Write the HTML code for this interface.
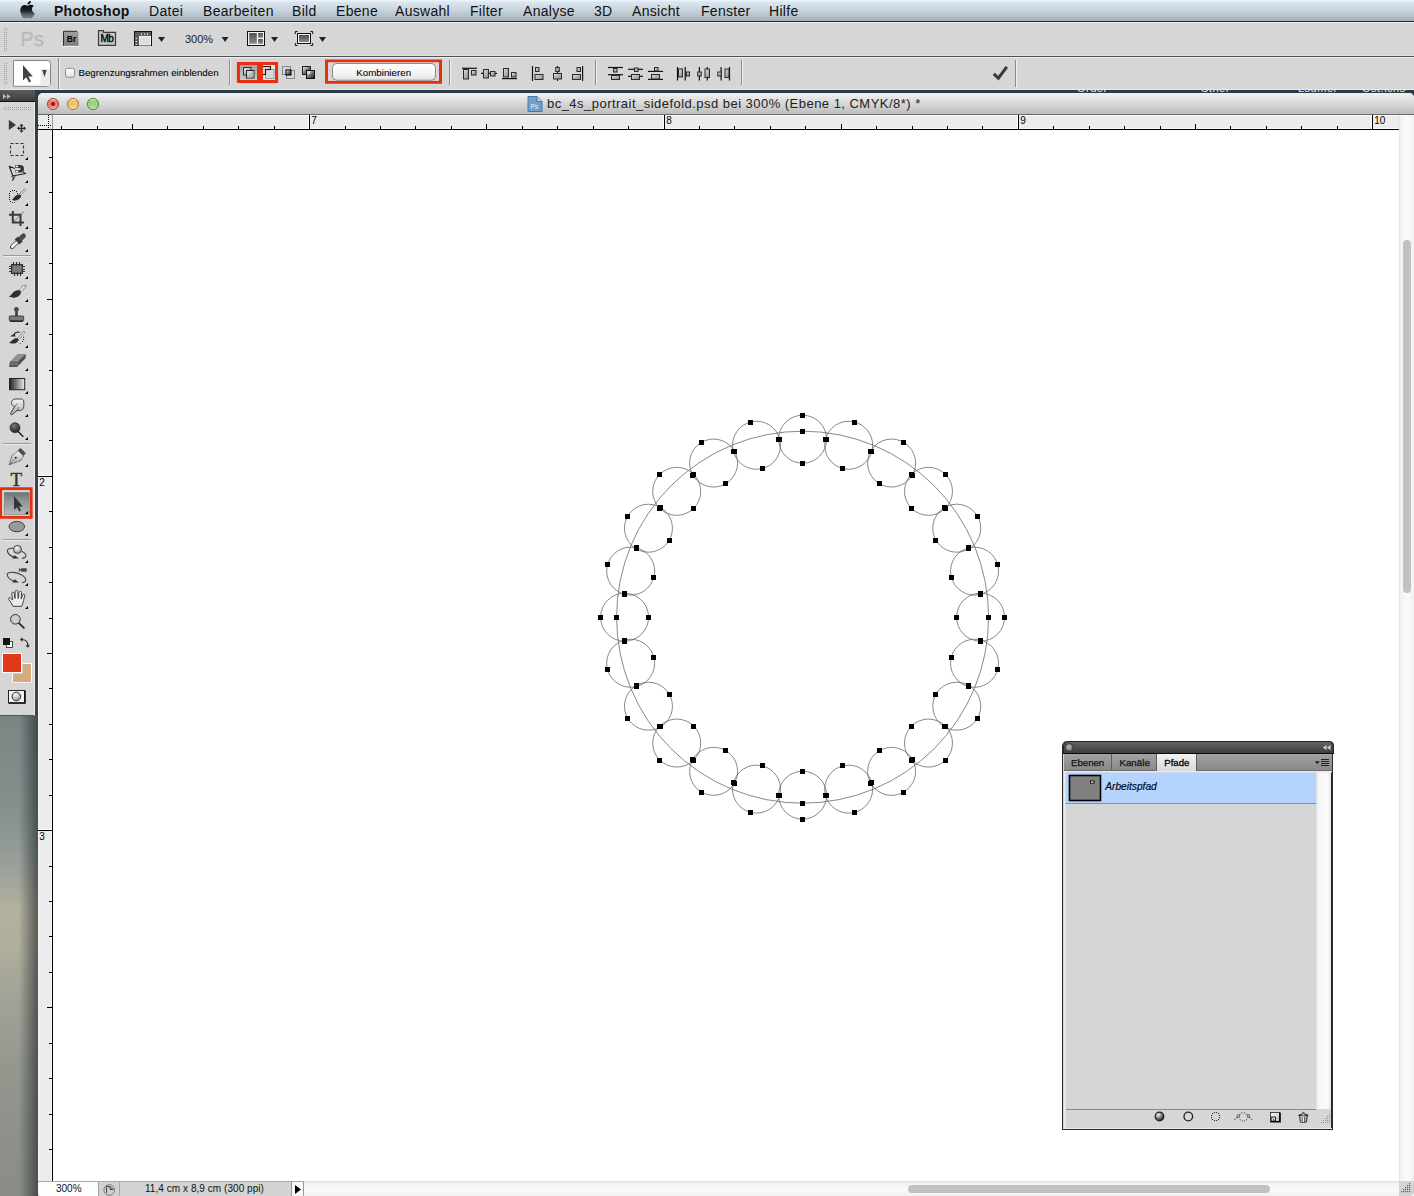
<!DOCTYPE html>
<html><head><meta charset="utf-8">
<style>
*{margin:0;padding:0;box-sizing:border-box}
html,body{width:1414px;height:1196px;overflow:hidden;background:#2a3c4a;font-family:"Liberation Sans",sans-serif}
.a{position:absolute}
svg{overflow:visible}
#menubar{left:0;top:0;width:1414px;height:22px;background:linear-gradient(#f0f7fc 0px,#dbe7f0 2px,#c9d5de 10px,#a9b5bd 20px);border-bottom:1px solid #1e2a34}
#menubar span{position:absolute;top:3px;font-size:14px;color:#111;letter-spacing:0.3px}
#appbar{left:0;top:22px;width:1414px;height:36px;background:#d6d6d6;border-top:1px solid #f0f0f0}
#appbar .l1{left:0;top:32px;width:1414px;height:1px;background:#e4e4e4}
#appbar .l2{left:0;top:33px;width:1414px;height:1px;background:#4e5256}
#appbar .l3{left:0;top:34px;width:1414px;height:1px;background:#ececec}
#optbar{left:0;top:58px;width:1414px;height:32px;background:#d6d6d6;border-bottom:1px solid #ececec}
#tools{left:0;top:102px;width:35px;height:614px;background:#d6d6d6;border-right:1px solid #ececec;border-bottom:1px solid #555}
#toolhdr{left:0;top:90px;width:35px;height:12px;background:linear-gradient(#5c5c5c,#3e3e3e);border-bottom:1px solid #111}
#desk{left:0;top:716px;width:38px;height:480px;background:linear-gradient(90deg,rgba(0,0,0,0) 0%,rgba(0,0,0,0) 50%,rgba(30,38,40,0.3) 75%,rgba(30,38,40,0.62) 100%),linear-gradient(#7a8584 0%,#86908e 20%,#9ca19a 32%,#b2b09e 40%,#b0ae9c 48%,#a2a398 58%,#95988f 72%,#8e9189 86%,#8a8d86 100%)}
#docwin{left:38px;top:93px;width:1376px;height:1103px;background:#fff;border-radius:5px 5px 0 5px;overflow:hidden}
#title{left:0;top:0;width:1376px;height:22px;background:linear-gradient(#f2f2f2,#dcdcdc 40%,#bdbdbd);border-bottom:1px solid #6a6a6a}
#title .t{position:absolute;left:509px;top:3px;font-size:13px;color:#222;letter-spacing:0.47px;white-space:nowrap}
#hruler{left:38px;top:115px;width:1361px;height:15px;background:#ececec;border-top:1px solid #fafafa;border-bottom:1px solid #000;box-shadow:inset 0 -1px 0 #fafafa}
#vruler{left:38px;top:130px;width:15px;height:1051px;background:#ececec;border-right:1px solid #000;box-shadow:inset -1px 0 0 #fafafa,inset 1px 0 0 #f6f6f6}
#corner{left:38px;top:115px;width:15px;height:15px;background:#ececec;border-right:1px solid #999;border-bottom:1px solid #000}
#vscroll{left:1399px;top:115px;width:15px;height:1066px;background:linear-gradient(90deg,#e2e2e2,#f4f4f4 2px,#fafafa 60%,#f0f0f0)}
#vthumb{left:1403px;top:240px;width:8px;height:353px;background:#c1c1c1;border-radius:4px}
#hscroll{left:304px;top:1181px;width:1095px;height:15px;background:linear-gradient(#e0e0e0,#f2f2f2 2px,#fafafa 60%,#f0f0f0)}
#hthumb{left:908px;top:1185px;width:362px;height:8px;background:#c1c1c1;border-radius:4px}
#status{left:38px;top:1181px;width:266px;height:15px;background:#d4d4d4;border-top:1px solid #a8a8a8;font-size:10px;color:#111}
#panel{left:1062px;top:741px;width:271px;height:389px;background:#d6d6d6;border-style:solid;border-color:#2a2a2a;border-width:0 2px 1px 1px;border-radius:5px 5px 0 0}
</style></head><body>
<div id="menubar" class="a">
<svg class="a" style="left:20px;top:0px" width="16" height="20">
<defs><linearGradient id="ap" x1="0" y1="0" x2="0" y2="1"><stop offset="0" stop-color="#0a0a0a"/><stop offset="0.45" stop-color="#1a2630"/><stop offset="0.7" stop-color="#58626a"/><stop offset="1" stop-color="#7c8488"/></linearGradient></defs>
<path d="M7.4 4.5 C7.3 2.8 8.8 1.0 11.0 0.9 C11.1 2.8 9.4 4.4 7.4 4.5 Z" fill="#0a0a0a"/>
<path d="M7.5 5.8 C6.5 5.0 5.2 4.8 4.2 4.9 C1.8 5.2 0.3 7.5 0.3 10.2 C0.3 13.8 2.5 18.6 4.6 18.6 C5.6 18.6 6.2 18.0 7.5 18.0 C8.8 18.0 9.3 18.6 10.4 18.6 C12.2 18.6 14.0 15.6 14.9 13.5 C13.0 12.6 12.0 11.0 12.0 9.2 C12.0 7.6 12.9 6.4 14.0 5.8 C13.0 5.1 11.8 4.8 10.8 4.8 C9.4 4.8 8.5 5.5 7.5 5.8 Z" fill="url(#ap)"/>
</svg>

<span style="left:54px;font-weight:bold;letter-spacing:0.28px">Photoshop</span>
<span style="left:149px">Datei</span>
<span style="left:203px">Bearbeiten</span>
<span style="left:292px">Bild</span>
<span style="left:336px">Ebene</span>
<span style="left:395px">Auswahl</span>
<span style="left:470px">Filter</span>
<span style="left:523px">Analyse</span>
<span style="left:594px">3D</span>
<span style="left:632px">Ansicht</span>
<span style="left:701px">Fenster</span>
<span style="left:769px">Hilfe</span>
</div>
<div id="appbar" class="a"><div class="a l1"></div><div class="a l2"></div><div class="a l3"></div></div>
<svg class="a" style="left:0;top:22px" width="340" height="36" font-family="Liberation Sans">
<defs>
<linearGradient id="brg" x1="0" y1="0" x2="0" y2="1"><stop offset="0" stop-color="#a0a0a0"/><stop offset="1" stop-color="#7e7e7e"/></linearGradient>
<linearGradient id="pane" x1="0" y1="0" x2="0" y2="1"><stop offset="0" stop-color="#505050"/><stop offset="1" stop-color="#8a8a8a"/></linearGradient>
</defs>
<g fill="#a0a0a0">
<rect x="4" y="6" width="1" height="1"/><rect x="6" y="6" width="1" height="1"/><rect x="4" y="8" width="1" height="1"/><rect x="6" y="8" width="1" height="1"/><rect x="4" y="10" width="1" height="1"/><rect x="6" y="10" width="1" height="1"/><rect x="4" y="12" width="1" height="1"/><rect x="6" y="12" width="1" height="1"/><rect x="4" y="14" width="1" height="1"/><rect x="6" y="14" width="1" height="1"/><rect x="4" y="16" width="1" height="1"/><rect x="6" y="16" width="1" height="1"/><rect x="4" y="18" width="1" height="1"/><rect x="6" y="18" width="1" height="1"/><rect x="4" y="20" width="1" height="1"/><rect x="6" y="20" width="1" height="1"/><rect x="4" y="22" width="1" height="1"/><rect x="6" y="22" width="1" height="1"/><rect x="4" y="24" width="1" height="1"/><rect x="6" y="24" width="1" height="1"/><rect x="4" y="26" width="1" height="1"/><rect x="6" y="26" width="1" height="1"/><rect x="4" y="28" width="1" height="1"/><rect x="6" y="28" width="1" height="1"/>
</g>
<text x="20.2" y="24.4" font-size="20.5" fill="#f4f4f4" stroke="#f4f4f4" stroke-width="0.8">Ps</text>
<text x="20.2" y="23.6" font-size="20.5" fill="#bababa" stroke="#bababa" stroke-width="0.8">Ps</text>
<!-- Br -->
<rect x="63.5" y="9.3" width="15" height="14.5" fill="url(#brg)"/>
<path d="M63.5 23.8 V9.3 H77" fill="none" stroke="#2a2a2a" stroke-width="1"/>
<rect x="63" y="24" width="16" height="1" fill="#f2f2f2"/>
<text x="66.8" y="20.2" font-size="8.6" font-weight="bold" fill="#000">Br</text>
<!-- Mb -->
<path d="M98.5 23.3 V8.6 H103.5 V10.4 H115.5 V23.3 Z" fill="#c6c6c6" stroke="#3a3a3a" stroke-width="1.2"/>
<text x="100.4" y="20.3" font-size="10" fill="#000" stroke="#000" stroke-width="0.35" letter-spacing="-0.4">Mb</text>
<!-- frame icon -->
<rect x="134.5" y="9.5" width="17" height="14" fill="#dedede" stroke="#111" stroke-width="1"/>
<rect x="135" y="10" width="16" height="4" fill="#5e5e5e"/>
<rect x="135" y="10" width="4" height="13.5" fill="#5e5e5e"/>
<rect x="139.5" y="14.5" width="11" height="8.5" fill="none" stroke="#f4f4f4" stroke-width="1"/>
<g fill="#e8e8e8"><rect x="141" y="11.5" width="1" height="1.5"/><rect x="144" y="11.5" width="1" height="1.5"/><rect x="147" y="11.5" width="1" height="1.5"/><rect x="135.5" y="16" width="1.5" height="1"/><rect x="135.5" y="19" width="1.5" height="1"/><rect x="135.5" y="22" width="1.5" height="1"/></g>
<path d="M158 14.9 H165 L161.5 20 Z" fill="#222"/>
<text x="185" y="21" font-size="11" fill="#222">300%</text>
<path d="M221.7 14.9 H228.5 L225.1 20 Z" fill="#222"/>
<!-- arrange -->
<rect x="247.5" y="9.5" width="17" height="14" fill="#f4f4f4" stroke="#111" stroke-width="1"/>
<rect x="249.2" y="11" width="7.6" height="10.8" fill="url(#pane)"/>
<rect x="258.1" y="11" width="4.8" height="4.8" fill="url(#pane)"/>
<rect x="258.1" y="17" width="4.8" height="4.8" fill="url(#pane)"/>
<path d="M271 14.9 H278 L274.5 20 Z" fill="#222"/>
<!-- screen mode -->
<path d="M295.3 12 V9.5 H297.5 M310.5 9.5 H312.7 V12 M312.7 21 V23.5 H310.5 M297.5 23.5 H295.3 V21" fill="none" stroke="#111" stroke-width="1"/>
<rect x="297.5" y="11.5" width="13" height="10" fill="#f4f4f4" stroke="#111" stroke-width="1"/>
<rect x="299" y="13" width="10" height="7" fill="url(#pane)"/>
<path d="M319 14.9 H326 L322.5 20 Z" fill="#222"/>
</svg>

<div id="optbar" class="a"></div>
<svg class="a" style="left:0;top:56px" width="1414" height="36" font-family="Liberation Sans">
<defs>
<linearGradient id="cbx" x1="0" y1="0" x2="0" y2="1"><stop offset="0" stop-color="#ffffff"/><stop offset="1" stop-color="#e2e2e2"/></linearGradient>
<linearGradient id="btn" x1="0" y1="0" x2="0" y2="1"><stop offset="0" stop-color="#ffffff"/><stop offset="0.5" stop-color="#f6f6f6"/><stop offset="1" stop-color="#e4e4e4"/></linearGradient>
<linearGradient id="sel" x1="0" y1="0" x2="0" y2="1"><stop offset="0" stop-color="#9ea4a6"/><stop offset="1" stop-color="#c8cacb"/></linearGradient>
<linearGradient id="blk" x1="0" y1="0" x2="1" y2="1"><stop offset="0" stop-color="#e8e8e8"/><stop offset="1" stop-color="#9a9a9a"/></linearGradient>
<linearGradient id="dk" x1="0" y1="0" x2="1" y2="1"><stop offset="0" stop-color="#ffffff"/><stop offset="0.5" stop-color="#777"/><stop offset="1" stop-color="#111"/></linearGradient>
</defs>
<!-- grip -->
<g fill="#a0a0a0">
<rect x="4" y="7" width="1" height="1"/><rect x="6" y="7" width="1" height="1"/><rect x="4" y="9" width="1" height="1"/><rect x="6" y="9" width="1" height="1"/><rect x="4" y="11" width="1" height="1"/><rect x="6" y="11" width="1" height="1"/><rect x="4" y="13" width="1" height="1"/><rect x="6" y="13" width="1" height="1"/><rect x="4" y="15" width="1" height="1"/><rect x="6" y="15" width="1" height="1"/><rect x="4" y="17" width="1" height="1"/><rect x="6" y="17" width="1" height="1"/><rect x="4" y="19" width="1" height="1"/><rect x="6" y="19" width="1" height="1"/><rect x="4" y="21" width="1" height="1"/><rect x="6" y="21" width="1" height="1"/><rect x="4" y="23" width="1" height="1"/><rect x="6" y="23" width="1" height="1"/><rect x="4" y="25" width="1" height="1"/><rect x="6" y="25" width="1" height="1"/><rect x="4" y="27" width="1" height="1"/><rect x="6" y="27" width="1" height="1"/>
</g>
<!-- preset box -->
<path d="M13.5 4.5 H47.5 Q50.5 4.5 50.5 7.5 V27.3 Q50.5 30.3 47.5 30.3 H13.5 Z" fill="#fff" stroke="#858585" stroke-width="1"/>
<rect x="40.5" y="13" width="9.5" height="16.8" fill="#ececec"/>
<path d="M23 9 V24.5 L26.3 21.3 L29 26.5 L31 25.5 L28.4 20.4 H32.8 Z" fill="#444"/>
<path d="M42.2 14 H46.7 L44.5 21 Z" fill="#444"/>
<rect x="58" y="2" width="1" height="31" fill="#8a8a8a"/><rect x="59" y="2" width="1" height="31" fill="#f0f0f0"/>
<!-- checkbox -->
<rect x="65.5" y="12.3" width="9" height="9" rx="2" fill="url(#cbx)" stroke="#8e8e8e" stroke-width="1"/>
<text x="78.5" y="20.3" font-size="9.7" fill="#000010" stroke="#000010" stroke-width="0.08">Begrenzungsrahmen einblenden</text>
<rect x="229" y="4" width="1" height="25" fill="#8a8a8a"/><rect x="230" y="4" width="1" height="25" fill="#f0f0f0"/>
<!-- red box 1 -->
<path d="M236.9 5.9 H278.1 V27 H236.9 Z M240 9 V24 H257 V9 Z M263 9 V24 H275 V9 Z" fill="#e8300e" fill-rule="evenodd"/>
<rect x="240" y="9" width="17" height="15" fill="url(#sel)"/>
<rect x="243.5" y="11.5" width="7.5" height="7.5" fill="url(#blk)" stroke="#333" stroke-width="1"/>
<rect x="246.5" y="14.5" width="7.5" height="7.5" fill="#c8c8c8" stroke="#222" stroke-width="1"/>
<rect x="247" y="15" width="6.5" height="6.5" fill="url(#blk)"/>
<rect x="263" y="9" width="11.8" height="14.8" fill="#dde6e8"/>
<rect x="265.5" y="13.5" width="8.5" height="9" fill="#d8d8d8" stroke="#9aa4a4" stroke-width="1"/>
<path d="M263 18.5 H265.5 V13.5 H270.5 V10.5 H263 Z" fill="#d0d4d4"/>
<path d="M263 18.5 H265.5 V13.5 H270.5 V10.5 H263" fill="none" stroke="#1a1a1a" stroke-width="1.1"/>
<!-- intersect -->
<rect x="282.5" y="10.5" width="8" height="8" fill="none" stroke="#888" stroke-width="1"/>
<rect x="286.5" y="14.5" width="8" height="8" fill="none" stroke="#888" stroke-width="1"/>
<rect x="286" y="14" width="5" height="5" fill="url(#dk)" stroke="#000" stroke-width="1"/>
<!-- exclude -->
<rect x="302.5" y="10.5" width="8" height="8" fill="url(#dk)" stroke="#222" stroke-width="1"/>
<rect x="306.5" y="14.5" width="8" height="8" fill="url(#dk)" stroke="#111" stroke-width="1"/>
<rect x="307" y="15" width="3" height="3" fill="#d8d8d8"/>
<!-- red box 2 -->
<path d="M325 3.4 H442 V27.8 H325 Z M328 6.4 V24.8 H439 V6.4 Z" fill="#e8300e" fill-rule="evenodd"/>
<rect x="328" y="6.4" width="111" height="18.4" fill="#d6d6d6"/>
<rect x="332.5" y="7.5" width="103" height="16.7" rx="4" fill="url(#btn)" stroke="#8a8a8a" stroke-width="1"/>
<text x="356.2" y="19.6" font-size="9.7" fill="#000010" stroke="#000010" stroke-width="0.1" letter-spacing="0.05">Kombinieren</text>
<rect x="449" y="4" width="1" height="25" fill="#8a8a8a"/><rect x="450" y="4" width="1" height="25" fill="#f0f0f0"/>
<defs><linearGradient id="ag" x1="0" y1="0" x2="1" y2="1"><stop offset="0" stop-color="#e0e0e0"/><stop offset="1" stop-color="#888"/></linearGradient></defs><rect x="462" y="11.7" width="15" height="1.2" fill="#111"/><rect x="463.5" y="13.5" width="5.0" height="9.5" fill="url(#ag)" stroke="#2a2a2a" stroke-width="1"/><rect x="471.5" y="14.5" width="4.5" height="4.5" fill="url(#ag)" stroke="#2a2a2a" stroke-width="1"/><rect x="481" y="16.8" width="16" height="1.2" fill="#111"/><rect x="483.5" y="13.5" width="5.0" height="8.5" fill="url(#ag)" stroke="#2a2a2a" stroke-width="1"/><rect x="490.5" y="15.5" width="4.5" height="4.5" fill="url(#ag)" stroke="#2a2a2a" stroke-width="1"/><rect x="502" y="22.0" width="15" height="1.2" fill="#111"/><rect x="503.5" y="12.5" width="5.0" height="8.5" fill="url(#ag)" stroke="#2a2a2a" stroke-width="1"/><rect x="511.5" y="16.5" width="4.5" height="4.5" fill="url(#ag)" stroke="#2a2a2a" stroke-width="1"/><rect x="531.9" y="10" width="1.2" height="15" fill="#111"/><rect x="535.5" y="11.5" width="3.5" height="4.0" fill="url(#ag)" stroke="#2a2a2a" stroke-width="1"/><rect x="535.0" y="18.5" width="8.0" height="5.0" fill="url(#ag)" stroke="#2a2a2a" stroke-width="1"/><rect x="556.9" y="10" width="1.2" height="15" fill="#111"/><rect x="555.7" y="11.5" width="3.6" height="4.0" fill="url(#ag)" stroke="#2a2a2a" stroke-width="1"/><rect x="553.5" y="17.5" width="8.0" height="5.5" fill="url(#ag)" stroke="#2a2a2a" stroke-width="1"/><rect x="582.0" y="10" width="1.2" height="15" fill="#111"/><rect x="577.0" y="11.5" width="3.5" height="4.0" fill="url(#ag)" stroke="#2a2a2a" stroke-width="1"/><rect x="572.5" y="18.5" width="8.0" height="5.0" fill="url(#ag)" stroke="#2a2a2a" stroke-width="1"/><rect x="608" y="10.9" width="15" height="1.2" fill="#111"/><rect x="608" y="18.1" width="15" height="1.2" fill="#111"/><rect x="613.5" y="12.5" width="3.5" height="3.5" fill="url(#ag)" stroke="#2a2a2a" stroke-width="1"/><rect x="611.5" y="19.5" width="8.0" height="4.0" fill="url(#ag)" stroke="#2a2a2a" stroke-width="1"/><rect x="628" y="12.7" width="15" height="1.2" fill="#111"/><rect x="628" y="19.7" width="15" height="1.2" fill="#111"/><rect x="634.5" y="12.0" width="3.5" height="3.5" fill="url(#ag)" stroke="#2a2a2a" stroke-width="1"/><rect x="631.5" y="18.5" width="8.0" height="5.0" fill="url(#ag)" stroke="#2a2a2a" stroke-width="1"/><rect x="648" y="14.8" width="15" height="1.2" fill="#111"/><rect x="648" y="22.8" width="15" height="1.2" fill="#111"/><rect x="654.5" y="11.5" width="3.5" height="3.5" fill="url(#ag)" stroke="#2a2a2a" stroke-width="1"/><rect x="651.5" y="18.5" width="8.0" height="4.5" fill="url(#ag)" stroke="#2a2a2a" stroke-width="1"/><rect x="676.9" y="11" width="1.2" height="13.5" fill="#111"/><rect x="684.6" y="11" width="1.2" height="13.5" fill="#111"/><rect x="678.5" y="13.0" width="4.0" height="8.0" fill="url(#ag)" stroke="#2a2a2a" stroke-width="1"/><rect x="686.5" y="16.0" width="3.0" height="4.0" fill="url(#ag)" stroke="#2a2a2a" stroke-width="1"/><rect x="698.8" y="11" width="1.2" height="13.5" fill="#111"/><rect x="706.7" y="11" width="1.2" height="13.5" fill="#111"/><rect x="697.7" y="16.0" width="3.6" height="4.0" fill="url(#ag)" stroke="#2a2a2a" stroke-width="1"/><rect x="705.0" y="13.0" width="4.5" height="8.5" fill="url(#ag)" stroke="#2a2a2a" stroke-width="1"/><rect x="720.5" y="11" width="1.2" height="13.5" fill="#111"/><rect x="728.9" y="11" width="1.2" height="13.5" fill="#111"/><rect x="717.8" y="16.0" width="3.5" height="4.0" fill="url(#ag)" stroke="#2a2a2a" stroke-width="1"/><rect x="725.0" y="13.0" width="4.0" height="8.5" fill="url(#ag)" stroke="#2a2a2a" stroke-width="1"/>
<rect x="595" y="4" width="1" height="25" fill="#8a8a8a"/><rect x="596" y="4" width="1" height="25" fill="#f0f0f0"/>
<rect x="741" y="4" width="1" height="25" fill="#8a8a8a"/><rect x="742" y="4" width="1" height="25" fill="#f0f0f0"/>
<!-- check -->
<path d="M993.8 73.8 L998.4 78.2 L1006.8 66.8" transform="translate(0,-56)" fill="none" stroke="#3a3a3a" stroke-width="3" stroke-linejoin="miter" stroke-linecap="butt"/>
<rect x="1015" y="4" width="1" height="27" fill="#8a8a8a"/><rect x="1016" y="4" width="1" height="27" fill="#f0f0f0"/>
</svg>

<div class="a" style="left:1060px;top:90px;width:354px;height:2px;overflow:hidden">
<svg class="a" style="left:-1060px;top:-90px" width="1414" height="100" font-family="Liberation Sans" font-size="11" fill="#e8eef2">
<text x="1077" y="91.6" letter-spacing="0.5">Order</text>
<text x="1201" y="91.6" letter-spacing="0.5">Sther</text>
<text x="1298" y="91.6" letter-spacing="0.5">Lsumer</text>
<text x="1362" y="91.6" letter-spacing="0.5">Ost.icns</text>
</svg></div>

<div id="tools" class="a"></div>
<div id="toolhdr" class="a"></div>
<svg class="a" style="left:0;top:0" width="36" height="716">
<defs>
<linearGradient id="tg1" x1="0" y1="0" x2="0" y2="1"><stop offset="0" stop-color="#8a8a8a"/><stop offset="1" stop-color="#3a3a3a"/></linearGradient>
<linearGradient id="tg2" x1="0" y1="0" x2="1" y2="0"><stop offset="0" stop-color="#1e1e1e"/><stop offset="1" stop-color="#f0f0f0"/></linearGradient>
<linearGradient id="tg3" x1="0" y1="0" x2="0" y2="1"><stop offset="0" stop-color="#f4f4f4"/><stop offset="1" stop-color="#a8a8a8"/></linearGradient>
<linearGradient id="selbtn" x1="0" y1="0" x2="0" y2="1"><stop offset="0" stop-color="#6e7272"/><stop offset="0.3" stop-color="#8a8e8e"/><stop offset="1" stop-color="#b4b8b8"/></linearGradient>
<radialGradient id="ball" cx="40%" cy="30%" r="70%"><stop offset="0" stop-color="#fafafa"/><stop offset="1" stop-color="#9a9a9a"/></radialGradient>
<radialGradient id="dball" cx="40%" cy="30%" r="70%"><stop offset="0" stop-color="#7a7a7a"/><stop offset="1" stop-color="#222"/></radialGradient>
</defs>
<!-- header >> -->
<path d="M3 94 L6.5 96.5 L3 99 Z M7 94 L10.5 96.5 L7 99 Z" fill="#bdbdbd"/>
<!-- grip dots row -->
<g fill="#9a9a9a">
<rect x="4" y="107" width="28" height="1" fill="none"/>
</g>
<g fill="#a0a0a0"><rect x="4" y="107" width="1" height="1"/><rect x="6" y="107" width="1" height="1"/><rect x="8" y="107" width="1" height="1"/><rect x="10" y="107" width="1" height="1"/><rect x="12" y="107" width="1" height="1"/><rect x="14" y="107" width="1" height="1"/><rect x="16" y="107" width="1" height="1"/><rect x="18" y="107" width="1" height="1"/><rect x="20" y="107" width="1" height="1"/><rect x="22" y="107" width="1" height="1"/><rect x="24" y="107" width="1" height="1"/><rect x="26" y="107" width="1" height="1"/><rect x="28" y="107" width="1" height="1"/><rect x="30" y="107" width="1" height="1"/><rect x="4" y="109" width="1" height="1"/><rect x="6" y="109" width="1" height="1"/><rect x="8" y="109" width="1" height="1"/><rect x="10" y="109" width="1" height="1"/><rect x="12" y="109" width="1" height="1"/><rect x="14" y="109" width="1" height="1"/><rect x="16" y="109" width="1" height="1"/><rect x="18" y="109" width="1" height="1"/><rect x="20" y="109" width="1" height="1"/><rect x="22" y="109" width="1" height="1"/><rect x="24" y="109" width="1" height="1"/><rect x="26" y="109" width="1" height="1"/><rect x="28" y="109" width="1" height="1"/><rect x="30" y="109" width="1" height="1"/></g>
<!-- separators -->
<rect x="3" y="255" width="28" height="1" fill="#9a9a9a"/><rect x="3" y="256" width="28" height="1" fill="#ececec"/>
<rect x="3" y="443" width="28" height="1" fill="#9a9a9a"/><rect x="3" y="444" width="28" height="1" fill="#ececec"/>
<rect x="3" y="539" width="28" height="1" fill="#9a9a9a"/><rect x="3" y="540" width="28" height="1" fill="#ececec"/>
<!-- corner triangles -->
<g fill="#000">
<path d="M28 157 V160 H25 Z"/><path d="M28 180 V183 H25 Z"/><path d="M28 203 V206 H25 Z"/><path d="M28 226 V229 H25 Z"/><path d="M28 249 V252 H25 Z"/>
<path d="M28 276 V279 H25 Z"/><path d="M28 299 V302 H25 Z"/><path d="M28 322 V325 H25 Z"/><path d="M28 345 V348 H25 Z"/>
<path d="M28 368 V371 H25 Z"/><path d="M28 391 V394 H25 Z"/><path d="M28 414 V417 H25 Z"/><path d="M28 437 V440 H25 Z"/>
<path d="M28 464 V467 H25 Z"/><path d="M28 511 V514 H25 Z"/><path d="M28 533 V536 H25 Z"/>
<path d="M28 560 V563 H25 Z"/><path d="M28 583 V586 H25 Z"/><path d="M28 606 V609 H25 Z"/>
</g>
<!-- 1 move -->
<path d="M8.8 119.8 V130 L16 125 Z" fill="#3a3a3a"/>
<path d="M21.5 123.8 L19.5 126 H20.9 V127.7 H19.2 V126.3 L17 128.3 L19.2 130.3 V128.9 H20.9 V130.6 H19.5 L21.5 132.8 L23.5 130.6 H22.1 V128.9 H23.8 V130.3 L26 128.3 L23.8 126.3 V127.7 H22.1 V126 H23.5 Z" fill="#222"/>
<!-- 2 marquee -->
<rect x="10.5" y="143.5" width="13" height="12" fill="none" stroke="#333" stroke-width="1.1" stroke-dasharray="3 2"/>
<!-- 3 magnetic lasso -->
<path d="M14.8 168.4 L9.3 166.3 L12.8 176 L25.5 173.5 L22.8 172" fill="none" stroke="#222" stroke-width="1.1" stroke-linejoin="round"/>
<ellipse cx="13.4" cy="176.5" rx="1.6" ry="1" fill="none" stroke="#333" stroke-width="0.9"/>
<path d="M14.4 177.5 L12.2 180.6" stroke="#222" stroke-width="1.2"/>
<path d="M15 165 H20.2 A3.8 3.8 0 0 1 20.2 172.6 H15 Z" fill="#333"/>
<rect x="15" y="167.9" width="5.3" height="2.3" fill="#d4d4d4"/>
<rect x="15.5" y="165.6" width="2.6" height="1.6" fill="#fafafa"/><rect x="15.5" y="170.7" width="2.6" height="1.6" fill="#fafafa"/>
<!-- 4 quick selection -->
<g fill="#111"><rect x="12" y="190" width="1" height="1"/><rect x="14" y="190" width="1" height="1"/><rect x="10" y="191" width="1" height="1"/><rect x="16" y="191" width="1" height="1"/><rect x="9" y="193" width="1" height="1"/><rect x="17" y="193" width="1" height="1"/><rect x="9" y="195" width="1" height="1"/><rect x="9" y="197" width="1" height="1"/><rect x="9" y="199" width="1" height="1"/><rect x="10" y="201" width="1" height="1"/></g>
<g fill="#555"><rect x="12" y="202" width="1" height="1"/><rect x="14" y="202" width="1" height="1"/></g>
<path d="M20.2 195.6 L25.9 189.7 L24.7 188.6 L19 194.4 Z" fill="#e0e0e0" stroke="#333" stroke-width="0.8" stroke-dasharray="0.9 0.6"/>
<path d="M12 199.6 C13.5 198.8 14.5 196.5 16.5 195.3 C18.3 194.3 20.3 194.3 21 195.8 C21.3 197.8 19 199.8 15.5 200.6 C14 200.9 12.8 200.5 12 199.6 Z" fill="#2a2a2a"/>
<!-- 5 crop -->
<path d="M12.8 211 V222.5 H24 M9 214.8 H20.5 V226" fill="none" stroke="#3a3a3a" stroke-width="2"/>
<path d="M13 222.5 L24 211.5" stroke="#444" stroke-width="0.7"/>
<!-- 6 eyedropper -->
<g transform="translate(10.6,248.3) rotate(-44)">
<path d="M0 0 L1.6 -1.7 H10 V1.7 H1.6 Z" fill="#f8f8f8" stroke="#333" stroke-width="0.9"/>
<rect x="9" y="-3.4" width="4.6" height="6.8" fill="#3a3a3a"/>
<path d="M13.5 -2.4 H18 A2.4 2.4 0 0 1 18 2.4 H13.5 Z" fill="#4a4a4a"/>
</g>
<!-- 7 spot healing (chip) -->
<rect x="11.5" y="264.5" width="11" height="9" fill="#7c7c7c" stroke="#333" stroke-width="1.1"/>
<g stroke="#333" stroke-width="1.1"><path d="M13.5 262 V266 M16.5 262 V266 M19.5 262 V266 M14.5 272 V276 M17.5 272 V276 M20.5 272 V276 M9 266.5 H12.5 M9 268.5 H12.5 M9 271.5 H12.5 M21.5 266.5 H25 M21.5 269.5 H25 M21.5 271.5 H25"/></g>
<!-- 8 brush -->
<path d="M19 290.3 L23.5 285.2 L26.7 285.8 L21.3 291.6 Z" fill="#e4e4e4" stroke="#333" stroke-width="0.8" stroke-dasharray="0.9 0.6"/>
<path d="M9 296.5 C11 295.5 12.5 292.5 15 291 C17.5 289.8 20 290.3 20.9 292 C21.1 294.5 18.5 297.5 14 297.7 C12 297.8 10 297.3 9 296.5 Z" fill="#2e2e2e"/>
<!-- 9 stamp -->
<circle cx="16.4" cy="309.3" r="2.4" fill="#4a4a4a"/>
<rect x="15.2" y="311" width="2.6" height="5.2" fill="#3e3e3e"/>
<rect x="9.3" y="316" width="14.4" height="4.9" rx="0.8" fill="url(#tg1)" stroke="#333" stroke-width="0.9" style="fill:#7a7a7a"/>
<rect x="10" y="320.6" width="13" height="1.4" fill="#2a2a2a"/>
<!-- 10 history brush -->
<path d="M19.7 332.3 C17.5 331.8 15.5 332.5 14.3 333.8" fill="none" stroke="#3a3a3a" stroke-width="1.3"/>
<path d="M10 336.5 L14.8 333 L15.5 336.6 Z" fill="#333"/>
<path d="M17.3 338.5 L23.6 331.2 L25.2 332.4 L18.7 339.6 Z" fill="#e4e4e4" stroke="#333" stroke-width="0.8" stroke-dasharray="0.9 0.6"/>
<path d="M9.2 342.6 C11 341.8 12.3 339.8 14.3 338.8 C16 338 17.6 338.2 18.5 339.4 C18.6 341.4 16.5 343.3 13.2 343.6 C11.6 343.7 10 343.3 9.2 342.6 Z" fill="#2e2e2e"/>
<g fill="#333"><rect x="23" y="336.8" width="1.1" height="1.1"/><rect x="23" y="339" width="1.1" height="1.1"/><rect x="22" y="341" width="1" height="1"/><rect x="19.8" y="343.1" width="0.9" height="0.9"/></g>
<!-- 11 eraser -->
<path d="M9.6 362 L10.8 360.8 H18.4 L17.6 366.5 H9.2 Z" fill="#6a6a6a"/>
<path d="M10.8 360.8 L17.6 354 H25.7 L18.4 360.8 Z" fill="#8e8e8e"/>
<path d="M18.4 360.8 L25.7 354 V358 L17.6 366.5 Z" fill="#4e4e4e"/>
<rect x="9.2" y="365.8" width="8.4" height="0.9" fill="#333"/>
<!-- 12 gradient -->
<rect x="9.5" y="378.5" width="15.2" height="11.2" fill="url(#tg2)" stroke="#222" stroke-width="1"/>
<!-- 13 smudge -->
<path d="M11.5 403.5 C11 401 13 399 16 399 H21.5 C23.2 399 23.8 400.5 23.8 402 V406.5 C23.8 409 22 410.5 19.5 410.5 H17 L12.3 414.5 C11.3 415.2 10 414.3 10.6 413.3 L14.8 406.5 C13 406 11.8 405 11.5 403.5 Z" fill="url(#tg3)" stroke="#333" stroke-width="0.9"/>
<path d="M14.8 406.5 L17.5 403.5 M17 410.5 L19 407" stroke="#555" stroke-width="0.8" fill="none"/>
<!-- 14 dodge -->
<circle cx="15" cy="427.7" r="5" fill="url(#dball)" stroke="#2a2a2a" stroke-width="0.7"/>
<path d="M17.8 431.3 L23.3 436.8" stroke="#222" stroke-width="1.5"/>
<!-- 15 pen -->
<path d="M9.2 464.7 L12 455.6 L18.2 451 L23.6 456 L20.8 460.5 Z" fill="url(#tg3)" stroke="#333" stroke-width="0.8" stroke-dasharray="1 0.4"/>
<path d="M9.4 464.5 L15.8 457.7" stroke="#444" stroke-width="0.7" stroke-dasharray="0.8 0.5"/>
<circle cx="15.8" cy="457.7" r="0.9" fill="#111"/>
<path d="M17.8 450.3 L20.5 448 L25.9 453.3 L23.4 455.8 Z" fill="#4a4a4a"/>
<!-- 16 type T -->
<text x="10.4" y="486" font-family="Liberation Serif" font-size="19" fill="#333" stroke="#333" stroke-width="0.45">T</text>
<!-- 17 path selection (red box) -->
<path d="M0 487.3 H32.6 V518.7 H0 Z M2.3 490.3 V515.7 H29.6 V490.3 Z" fill="#e8300e" fill-rule="evenodd"/>
<rect x="2.3" y="490.3" width="27.3" height="25.4" fill="#cfdcde"/>
<rect x="4.2" y="492.3" width="25" height="22.2" fill="url(#selbtn)" stroke="#7a8080" stroke-width="0.6"/>
<path d="M14 496 V510 L17 507.3 L19.3 511.5 L21 510.6 L18.9 506.5 H22.8 Z" fill="#333"/>
<path d="M28 511 V514 H25 Z" fill="#000"/>
<!-- 18 ellipse -->
<ellipse cx="16.8" cy="526.6" rx="7.8" ry="5.2" fill="url(#tg1)" stroke="#333" stroke-width="0.9" style="fill:#9a9a9a"/>
<!-- 19 3D rotate -->
<path d="M13.5 548.4 C10 547.8 7.2 549 7.3 550.9 C7.5 553.5 11 556.3 15.5 557.8" fill="none" stroke="#444" stroke-width="1.1"/>
<path d="M12 558.5 H18.9 L14.8 555.2 Z" fill="#333"/>
<path d="M21.7 551.2 C24.5 552.5 26 554.2 25.8 556 C25.6 557.6 24 558.3 22 558.4" fill="none" stroke="#444" stroke-width="1.1"/>
<circle cx="17.5" cy="549.4" r="4" fill="url(#ball)" stroke="#333" stroke-width="0.9"/>
<!-- 20 3D camera -->
<rect x="21" y="568.2" width="5.8" height="3.6" rx="0.8" fill="#4a4a4a"/><path d="M18.9 568 V572 L21.5 570 Z" fill="#4a4a4a"/>
<path d="M22 582.6 C25 582.3 26.3 580.8 25.6 578.8 C24.7 576 19 573 13.5 572.4 C9.5 572 7 573 7.2 574.8 C7.5 577.5 11 580.3 15.5 581.9" fill="none" stroke="#444" stroke-width="1.1"/>
<path d="M12 582.6 H18.9 L14.8 579.3 Z" fill="#333"/>
<!-- 21 hand -->
<path d="M13.2 606.3 L8.8 599.3 C8.2 598.3 9.2 597.2 10.3 597.8 L12.6 600 L11.8 593.6 C11.6 592 13.8 591.6 14.2 593.2 L15 598.5 L15.2 591.6 C15.2 590 17.8 590 17.8 591.6 L18.2 598.5 L19 592.4 C19.3 590.8 21.6 591 21.5 592.6 L21.2 599 L22.6 595 C23 593.6 25 594 24.8 595.5 L23.5 600.5 C23 603 22.2 605 21.7 606.3 Z" fill="url(#tg3)" stroke="#333" stroke-width="0.9" style="fill:#ececec"/>
<!-- 22 zoom -->
<circle cx="15.4" cy="619.3" r="4.8" fill="#cdcdcd" stroke="#333" stroke-width="1"/>
<path d="M18.6 622.9 L24.4 628.4" stroke="#222" stroke-width="1.7"/>
<!-- default colors -->
<rect x="6.5" y="641.5" width="6" height="6" fill="#fff" stroke="#222" stroke-width="0.8"/>
<rect x="3" y="638" width="7" height="7" fill="#111"/>
<!-- swap arrows -->
<path d="M21.5 639.5 C25 639.5 27.8 641.5 27.8 645.5" fill="none" stroke="#222" stroke-width="1.1"/>
<path d="M20 639.5 L22.5 637.3 V641.8 Z" fill="#222"/><path d="M27.8 647.8 L25.6 645.3 H30 Z" fill="#222"/>
<!-- fg/bg -->
<rect x="11.7" y="662.7" width="20.8" height="20.3" fill="#fff" stroke="#c8c8c8" stroke-width="0.5"/>
<rect x="13" y="664" width="18" height="18" fill="#d4aa80"/>
<rect x="1.7" y="652.5" width="20.8" height="21" fill="#fff" stroke="#c8c8c8" stroke-width="0.5"/>
<rect x="3" y="654" width="18" height="18" fill="#e13817"/>
<!-- quick mask -->
<rect x="8.5" y="690.5" width="16" height="12.5" fill="#f2f2f2" stroke="#222" stroke-width="1"/>
<path d="M9 703 H25 V690.5" fill="none" stroke="#111" stroke-width="1.6"/>
<circle cx="16.3" cy="696.5" r="4.3" fill="url(#ball)" stroke="#222" stroke-width="0.9"/>
</svg>

<div id="desk" class="a"></div>
<div id="strip" class="a" style="left:35px;top:90px;width:3px;height:626px;background:linear-gradient(#2d3e4b,#34434d 40%,#3c4548)"></div>
<div id="docwin" class="a">
 <div id="title" class="a"><svg class="a" style="left:0;top:0" width="80" height="22">
<defs>
<linearGradient id="gr" x1="0" y1="0" x2="0" y2="1"><stop offset="0" stop-color="#ffe0d8"/><stop offset="0.25" stop-color="#f27a6e"/><stop offset="0.6" stop-color="#f0786a"/><stop offset="1" stop-color="#ffb4a8"/></linearGradient>
<linearGradient id="gy" x1="0" y1="0" x2="0" y2="1"><stop offset="0" stop-color="#fff4d0"/><stop offset="0.25" stop-color="#eec070"/><stop offset="0.6" stop-color="#f0c274"/><stop offset="1" stop-color="#fde0a0"/></linearGradient>
<linearGradient id="gg" x1="0" y1="0" x2="0" y2="1"><stop offset="0" stop-color="#e8ffe0"/><stop offset="0.25" stop-color="#98d07a"/><stop offset="0.6" stop-color="#9cd480"/><stop offset="1" stop-color="#c8f0b0"/></linearGradient>
</defs>
<circle cx="15" cy="11" r="5.6" fill="url(#gr)" stroke="#8a4030" stroke-width="0.9"/>
<circle cx="15" cy="11" r="2" fill="#8a1a0a"/>
<circle cx="35" cy="11" r="5.6" fill="url(#gy)" stroke="#a87028" stroke-width="0.9"/>
<circle cx="55" cy="11" r="5.6" fill="url(#gg)" stroke="#4a7a3a" stroke-width="0.9"/>
</svg>
<svg class="a" style="left:489px;top:3px" width="16" height="16">
<path d="M1 0.5 H10 L15 5.5 V15.5 H1 Z" fill="#6fa0c8" stroke="#4a7aa8" stroke-width="1"/>
<path d="M10 0.5 V5.5 H15" fill="#bcd6ea" stroke="#4a7aa8" stroke-width="1"/>
<text x="3.5" y="13" font-size="6.5" fill="#e8f2fa" font-family="Liberation Sans">Ps</text>
</svg>
<span class="t">bc_4s_portrait_sidefold.psd bei 300% (Ebene 1, CMYK/8*) *</span>
</div>
</div>
<div id="hruler" class="a"></div>
<div id="vruler" class="a"></div>
<div id="corner" class="a"></div>
<svg class="a" style="left:0;top:0" width="1414" height="1196" font-family="Liberation Sans"><rect x="61" y="126" width="1" height="3" fill="#000"/><rect x="97" y="126" width="1" height="3" fill="#000"/><rect x="132" y="124" width="1" height="5" fill="#000"/><rect x="167" y="126" width="1" height="3" fill="#000"/><rect x="203" y="126" width="1" height="3" fill="#000"/><rect x="238" y="126" width="1" height="3" fill="#000"/><rect x="274" y="126" width="1" height="3" fill="#000"/><rect x="308" y="115" width="1" height="13" fill="#fff"/><rect x="309" y="115" width="1" height="14" fill="#000"/><text x="311.3" y="124.1" font-size="10" fill="#000">7</text><rect x="345" y="126" width="1" height="3" fill="#000"/><rect x="380" y="126" width="1" height="3" fill="#000"/><rect x="415" y="126" width="1" height="3" fill="#000"/><rect x="451" y="126" width="1" height="3" fill="#000"/><rect x="486" y="124" width="1" height="5" fill="#000"/><rect x="522" y="126" width="1" height="3" fill="#000"/><rect x="557" y="126" width="1" height="3" fill="#000"/><rect x="593" y="126" width="1" height="3" fill="#000"/><rect x="628" y="126" width="1" height="3" fill="#000"/><rect x="663" y="115" width="1" height="13" fill="#fff"/><rect x="664" y="115" width="1" height="14" fill="#000"/><text x="666.3" y="124.1" font-size="10" fill="#000">8</text><rect x="699" y="126" width="1" height="3" fill="#000"/><rect x="734" y="126" width="1" height="3" fill="#000"/><rect x="770" y="126" width="1" height="3" fill="#000"/><rect x="805" y="126" width="1" height="3" fill="#000"/><rect x="841" y="124" width="1" height="5" fill="#000"/><rect x="876" y="126" width="1" height="3" fill="#000"/><rect x="912" y="126" width="1" height="3" fill="#000"/><rect x="947" y="126" width="1" height="3" fill="#000"/><rect x="982" y="126" width="1" height="3" fill="#000"/><rect x="1017" y="115" width="1" height="13" fill="#fff"/><rect x="1018" y="115" width="1" height="14" fill="#000"/><text x="1020.3" y="124.1" font-size="10" fill="#000">9</text><rect x="1053" y="126" width="1" height="3" fill="#000"/><rect x="1089" y="126" width="1" height="3" fill="#000"/><rect x="1124" y="126" width="1" height="3" fill="#000"/><rect x="1160" y="126" width="1" height="3" fill="#000"/><rect x="1195" y="124" width="1" height="5" fill="#000"/><rect x="1230" y="126" width="1" height="3" fill="#000"/><rect x="1266" y="126" width="1" height="3" fill="#000"/><rect x="1301" y="126" width="1" height="3" fill="#000"/><rect x="1337" y="126" width="1" height="3" fill="#000"/><rect x="1371" y="115" width="1" height="13" fill="#fff"/><rect x="1372" y="115" width="1" height="14" fill="#000"/><text x="1374.3" y="124.1" font-size="10" fill="#000">10</text><rect x="49" y="157" width="3" height="1" fill="#000"/><rect x="49" y="192" width="3" height="1" fill="#000"/><rect x="49" y="228" width="3" height="1" fill="#000"/><rect x="49" y="263" width="3" height="1" fill="#000"/><rect x="47" y="299" width="5" height="1" fill="#000"/><rect x="49" y="334" width="3" height="1" fill="#000"/><rect x="49" y="370" width="3" height="1" fill="#000"/><rect x="49" y="405" width="3" height="1" fill="#000"/><rect x="49" y="440" width="3" height="1" fill="#000"/><rect x="38" y="475" width="13" height="1" fill="#fff"/><rect x="38" y="476" width="14" height="1" fill="#000"/><text x="39.3" y="486.1" font-size="10" fill="#000">2</text><rect x="49" y="511" width="3" height="1" fill="#000"/><rect x="49" y="547" width="3" height="1" fill="#000"/><rect x="49" y="582" width="3" height="1" fill="#000"/><rect x="49" y="618" width="3" height="1" fill="#000"/><rect x="47" y="653" width="5" height="1" fill="#000"/><rect x="49" y="688" width="3" height="1" fill="#000"/><rect x="49" y="724" width="3" height="1" fill="#000"/><rect x="49" y="759" width="3" height="1" fill="#000"/><rect x="49" y="795" width="3" height="1" fill="#000"/><rect x="38" y="829" width="13" height="1" fill="#fff"/><rect x="38" y="830" width="14" height="1" fill="#000"/><text x="39.3" y="840.1" font-size="10" fill="#000">3</text><rect x="49" y="866" width="3" height="1" fill="#000"/><rect x="49" y="901" width="3" height="1" fill="#000"/><rect x="49" y="936" width="3" height="1" fill="#000"/><rect x="49" y="972" width="3" height="1" fill="#000"/><rect x="47" y="1007" width="5" height="1" fill="#000"/><rect x="49" y="1043" width="3" height="1" fill="#000"/><rect x="49" y="1078" width="3" height="1" fill="#000"/><rect x="49" y="1114" width="3" height="1" fill="#000"/><rect x="49" y="1149" width="3" height="1" fill="#000"/></svg>
<svg class="a" style="left:0;top:0" width="60" height="135"><g fill="#000"><rect x="48" y="115" width="1" height="1"/><rect x="48" y="117" width="1" height="1"/><rect x="48" y="119" width="1" height="1"/><rect x="48" y="121" width="1" height="1"/><rect x="48" y="123" width="1" height="1"/><rect x="48" y="125" width="1" height="1"/><rect x="48" y="127" width="1" height="1"/><rect x="38" y="125" width="1" height="1"/><rect x="40" y="125" width="1" height="1"/><rect x="42" y="125" width="1" height="1"/><rect x="44" y="125" width="1" height="1"/><rect x="46" y="125" width="1" height="1"/><rect x="48" y="125" width="1" height="1"/><rect x="50" y="125" width="1" height="1"/></g></svg>
<div id="vscroll" class="a"></div>
<div id="vthumb" class="a"></div>
<div id="hscroll" class="a"></div>
<div id="hthumb" class="a"></div>
<div class="a" style="left:1399px;top:1181px;width:15px;height:15px;background:#d3d3d3;border-bottom-right-radius:4px"></div><svg class="a" style="left:0;top:0" width="1414" height="1196"><g fill="#5e5e5e"><rect x="1409" y="1183" width="1.2" height="1.2"/><rect x="1407" y="1185" width="1.2" height="1.2"/><rect x="1409" y="1185" width="1.2" height="1.2"/><rect x="1405" y="1187" width="1.2" height="1.2"/><rect x="1407" y="1187" width="1.2" height="1.2"/><rect x="1409" y="1187" width="1.2" height="1.2"/><rect x="1403" y="1189" width="1.2" height="1.2"/><rect x="1405" y="1189" width="1.2" height="1.2"/><rect x="1407" y="1189" width="1.2" height="1.2"/><rect x="1409" y="1189" width="1.2" height="1.2"/><rect x="1401" y="1191" width="1.2" height="1.2"/><rect x="1403" y="1191" width="1.2" height="1.2"/><rect x="1405" y="1191" width="1.2" height="1.2"/><rect x="1407" y="1191" width="1.2" height="1.2"/><rect x="1409" y="1191" width="1.2" height="1.2"/></g></svg>
<div id="status" class="a"><div class="a" style="left:0;top:0;width:61px;height:15px;background:#fdfdfd;border-right:1px solid #a0a0a0;border-bottom-left-radius:5px"></div>
<span class="a" style="left:18px;top:1px;font-size:10px">300%</span>
<div class="a" style="left:61px;top:0;width:21px;height:15px;background:#d2d2d2;border-right:1px solid #a8a8a8"></div>
<svg class="a" style="left:64px;top:1px" width="14" height="13"><circle cx="7.2" cy="7" r="5.3" fill="#cfcfcf" stroke="#7a7a7a" stroke-width="1"/><path d="M4.5 3.5 H8 V6.5 H11 M4.5 3.5 V10 M8 3.5 L11 6.5" fill="none" stroke="#444" stroke-width="1"/></svg>
<span class="a" style="left:107px;top:1px;font-size:10px;letter-spacing:0.05px">11,4 cm x 8,9 cm (300 ppi)</span>
<div class="a" style="left:253px;top:-1px;width:13px;height:16px;background:#f8f8f8;border:1px solid #9a9a9a;border-top:1px solid #a8a8a8"></div>
<svg class="a" style="left:256px;top:3px" width="8" height="10"><path d="M1 0 L7 4.5 L1 9 Z" fill="#000"/></svg>
</div>
<svg class="a" style="left:0;top:0" width="1414" height="1196"><g fill="none" stroke="#6a6a6a" stroke-width="0.8"><circle cx="802.6" cy="617.2" r="186"/><circle cx="802.60" cy="439.20" r="24"/><circle cx="848.67" cy="445.27" r="24"/><circle cx="891.60" cy="463.05" r="24"/><circle cx="928.47" cy="491.33" r="24"/><circle cx="956.75" cy="528.20" r="24"/><circle cx="974.53" cy="571.13" r="24"/><circle cx="980.60" cy="617.20" r="24"/><circle cx="974.53" cy="663.27" r="24"/><circle cx="956.75" cy="706.20" r="24"/><circle cx="928.47" cy="743.07" r="24"/><circle cx="891.60" cy="771.35" r="24"/><circle cx="848.67" cy="789.13" r="24"/><circle cx="802.60" cy="795.20" r="24"/><circle cx="756.53" cy="789.13" r="24"/><circle cx="713.60" cy="771.35" r="24"/><circle cx="676.73" cy="743.07" r="24"/><circle cx="648.45" cy="706.20" r="24"/><circle cx="630.67" cy="663.27" r="24"/><circle cx="624.60" cy="617.20" r="24"/><circle cx="630.67" cy="571.13" r="24"/><circle cx="648.45" cy="528.20" r="24"/><circle cx="676.73" cy="491.33" r="24"/><circle cx="713.60" cy="463.05" r="24"/><circle cx="756.53" cy="445.27" r="24"/></g><g fill="#000"><rect x="800" y="429" width="5" height="5"/><rect x="986" y="615" width="5" height="5"/><rect x="800" y="801" width="5" height="5"/><rect x="614" y="615" width="5" height="5"/><rect x="800" y="413" width="5" height="5"/><rect x="824" y="437" width="5" height="5"/><rect x="800" y="461" width="5" height="5"/><rect x="776" y="437" width="5" height="5"/><rect x="852" y="420" width="5" height="5"/><rect x="869" y="449" width="5" height="5"/><rect x="840" y="466" width="5" height="5"/><rect x="823" y="437" width="5" height="5"/><rect x="901" y="440" width="5" height="5"/><rect x="910" y="473" width="5" height="5"/><rect x="877" y="481" width="5" height="5"/><rect x="868" y="449" width="5" height="5"/><rect x="943" y="472" width="5" height="5"/><rect x="943" y="506" width="5" height="5"/><rect x="909" y="506" width="5" height="5"/><rect x="909" y="472" width="5" height="5"/><rect x="975" y="514" width="5" height="5"/><rect x="966" y="546" width="5" height="5"/><rect x="933" y="538" width="5" height="5"/><rect x="942" y="505" width="5" height="5"/><rect x="995" y="562" width="5" height="5"/><rect x="978" y="592" width="5" height="5"/><rect x="949" y="575" width="5" height="5"/><rect x="966" y="545" width="5" height="5"/><rect x="1002" y="615" width="5" height="5"/><rect x="978" y="639" width="5" height="5"/><rect x="954" y="615" width="5" height="5"/><rect x="978" y="591" width="5" height="5"/><rect x="995" y="667" width="5" height="5"/><rect x="966" y="684" width="5" height="5"/><rect x="949" y="655" width="5" height="5"/><rect x="978" y="638" width="5" height="5"/><rect x="975" y="716" width="5" height="5"/><rect x="942" y="724" width="5" height="5"/><rect x="933" y="692" width="5" height="5"/><rect x="966" y="683" width="5" height="5"/><rect x="943" y="758" width="5" height="5"/><rect x="909" y="758" width="5" height="5"/><rect x="909" y="724" width="5" height="5"/><rect x="943" y="724" width="5" height="5"/><rect x="901" y="790" width="5" height="5"/><rect x="868" y="781" width="5" height="5"/><rect x="877" y="748" width="5" height="5"/><rect x="910" y="757" width="5" height="5"/><rect x="852" y="810" width="5" height="5"/><rect x="823" y="793" width="5" height="5"/><rect x="840" y="763" width="5" height="5"/><rect x="869" y="780" width="5" height="5"/><rect x="800" y="817" width="5" height="5"/><rect x="776" y="793" width="5" height="5"/><rect x="800" y="769" width="5" height="5"/><rect x="824" y="793" width="5" height="5"/><rect x="748" y="810" width="5" height="5"/><rect x="731" y="780" width="5" height="5"/><rect x="760" y="763" width="5" height="5"/><rect x="777" y="793" width="5" height="5"/><rect x="699" y="790" width="5" height="5"/><rect x="690" y="757" width="5" height="5"/><rect x="723" y="748" width="5" height="5"/><rect x="732" y="781" width="5" height="5"/><rect x="657" y="758" width="5" height="5"/><rect x="657" y="724" width="5" height="5"/><rect x="691" y="724" width="5" height="5"/><rect x="691" y="758" width="5" height="5"/><rect x="625" y="716" width="5" height="5"/><rect x="634" y="683" width="5" height="5"/><rect x="667" y="692" width="5" height="5"/><rect x="658" y="724" width="5" height="5"/><rect x="605" y="667" width="5" height="5"/><rect x="622" y="638" width="5" height="5"/><rect x="651" y="655" width="5" height="5"/><rect x="634" y="684" width="5" height="5"/><rect x="598" y="615" width="5" height="5"/><rect x="622" y="591" width="5" height="5"/><rect x="646" y="615" width="5" height="5"/><rect x="622" y="639" width="5" height="5"/><rect x="605" y="562" width="5" height="5"/><rect x="634" y="545" width="5" height="5"/><rect x="651" y="575" width="5" height="5"/><rect x="622" y="592" width="5" height="5"/><rect x="625" y="514" width="5" height="5"/><rect x="658" y="505" width="5" height="5"/><rect x="667" y="538" width="5" height="5"/><rect x="634" y="546" width="5" height="5"/><rect x="657" y="472" width="5" height="5"/><rect x="691" y="472" width="5" height="5"/><rect x="691" y="506" width="5" height="5"/><rect x="657" y="506" width="5" height="5"/><rect x="699" y="440" width="5" height="5"/><rect x="732" y="449" width="5" height="5"/><rect x="723" y="481" width="5" height="5"/><rect x="690" y="473" width="5" height="5"/><rect x="748" y="420" width="5" height="5"/><rect x="777" y="437" width="5" height="5"/><rect x="760" y="466" width="5" height="5"/><rect x="731" y="449" width="5" height="5"/></g></svg>
<div id="panel" class="a"><svg class="a" style="left:-1062px;top:-741px" width="1414" height="1196" font-family="Liberation Sans">
<defs>
<linearGradient id="ptb" x1="0" y1="0" x2="0" y2="1"><stop offset="0" stop-color="#626262"/><stop offset="1" stop-color="#3e3e3e"/></linearGradient>
<linearGradient id="ptab" x1="0" y1="0" x2="0" y2="1"><stop offset="0" stop-color="#a2a2a2"/><stop offset="1" stop-color="#878787"/></linearGradient>
<linearGradient id="pact" x1="0" y1="0" x2="0" y2="1"><stop offset="0" stop-color="#f2f2f2"/><stop offset="1" stop-color="#d8d8d8"/></linearGradient>
<linearGradient id="psc" x1="0" y1="0" x2="1" y2="0"><stop offset="0" stop-color="#e6e6e6"/><stop offset="0.2" stop-color="#f8f8f8"/><stop offset="0.8" stop-color="#fbfbfb"/><stop offset="1" stop-color="#e0e0e0"/></linearGradient>
<radialGradient id="pcl" cx="45%" cy="40%" r="60%"><stop offset="0" stop-color="#b8b8b8"/><stop offset="1" stop-color="#6e6e6e"/></radialGradient>
<radialGradient id="pfill" cx="40%" cy="35%" r="65%"><stop offset="0" stop-color="#e0e0e0"/><stop offset="0.5" stop-color="#777"/><stop offset="1" stop-color="#111"/></radialGradient>
</defs>
<!-- title bar -->
<path d="M1062 753 V746 Q1062 741 1067 741 H1328 Q1333 741 1333 746 V753 Z" fill="#262626"/>
<path d="M1063 753 V746.5 Q1063 742 1067.5 742 H1327.5 Q1331.5 742 1331.5 746.5 V753 Z" fill="url(#ptb)"/>
<rect x="1062" y="753" width="271" height="1" fill="#0a0a0a"/>
<circle cx="1068.2" cy="747.5" r="4" fill="url(#pcl)" stroke="#2a2a2a" stroke-width="0.8"/>
<path d="M1325.5 745 V750.2 L1321.8 747.6 Z M1329.5 745 V750.2 L1325.8 747.6 Z" fill="#c8c8c8"/>
<!-- tabs -->
<rect x="1063" y="754" width="268" height="17" fill="url(#ptab)"/>
<rect x="1110" y="754" width="1" height="17" fill="#5e5e5e"/>
<rect x="1155" y="754" width="1" height="17" fill="#5e5e5e"/>
<rect x="1156" y="754" width="39" height="18" fill="url(#pact)"/>
<rect x="1195" y="754" width="1" height="17" fill="#5e5e5e"/>
<rect x="1063" y="770" width="93" height="1" fill="#6e6e6e"/><rect x="1196" y="770" width="135" height="1" fill="#6e6e6e"/>
<text x="1070" y="766.3" font-size="9.65" fill="#111" stroke="#111" stroke-width="0.25">Ebenen</text>
<text x="1118.4" y="766.3" font-size="9.8" fill="#111" stroke="#111" stroke-width="0.25">Kanäle</text>
<text x="1163.3" y="766.2" font-size="9.6" fill="#000" stroke="#000" stroke-width="0.3">Pfade</text>
<path d="M1313.8 761.2 H1318.8 L1316.3 764.2 Z" fill="#222"/>
<g fill="#222"><rect x="1320" y="759" width="8" height="1"/><rect x="1320" y="761" width="8" height="1"/><rect x="1320" y="763" width="8" height="1"/><rect x="1320" y="765" width="8" height="1"/></g>
<!-- content -->
<rect x="1063" y="771" width="268" height="1.5" fill="#ececec"/>
<rect x="1063" y="771" width="1.5" height="357" fill="#ececec"/>
<rect x="1064.5" y="772.5" width="250.7" height="30.5" fill="#b4d4fd"/>
<rect x="1064.5" y="803" width="250.7" height="1" fill="#8e8e8e"/>
<rect x="1315.2" y="772.5" width="14.8" height="336.5" fill="url(#psc)"/>
<rect x="1068.5" y="775.5" width="31" height="25" fill="#808080" stroke="#000" stroke-width="1.6"/>
<rect x="1089.5" y="781" width="3.5" height="2.2" fill="#fff" stroke="#000" stroke-width="0.9"/>
<text x="1104.2" y="790.2" font-size="10.2" font-style="italic" fill="#00001a" stroke="#00001a" stroke-width="0.15">Arbeitspfad</text>
<!-- footer -->
<rect x="1065" y="1109" width="250" height="1" fill="#8a8a8a"/>
<rect x="1063" y="1128" width="268" height="1" fill="#eaeaea"/>
<radialGradient id="pfill2" cx="35%" cy="30%" r="75%"><stop offset="0" stop-color="#f4f4f4"/><stop offset="0.55" stop-color="#7a7a7a"/><stop offset="1" stop-color="#1a1a1a"/></radialGradient>
<circle cx="1158.5" cy="1116.5" r="4.3" fill="url(#pfill2)" stroke="#1e1e1e" stroke-width="1.2"/>
<circle cx="1187.3" cy="1116.5" r="4.3" fill="#d8d8d8" stroke="#1e1e1e" stroke-width="1.3"/>
<g fill="#333"><rect x="1213" y="1112" width="1.1" height="1.1"/><rect x="1215" y="1112" width="1.1" height="1.1"/><rect x="1211" y="1113" width="1.1" height="1.1"/><rect x="1217" y="1113" width="1.1" height="1.1"/><rect x="1210" y="1115" width="1.1" height="1.1"/><rect x="1218" y="1115" width="1.1" height="1.1"/><rect x="1210" y="1117" width="1.1" height="1.1"/><rect x="1218" y="1117" width="1.1" height="1.1"/><rect x="1211" y="1119" width="1.1" height="1.1"/><rect x="1217" y="1119" width="1.1" height="1.1"/><rect x="1213" y="1120" width="1.1" height="1.1"/><rect x="1215" y="1120" width="1.1" height="1.1"/></g>
<g fill="#555"><rect x="1233.45" y="1118.95" width="1.1" height="1.1"/><rect x="1235.05" y="1117.25" width="1.1" height="1.1"/><rect x="1238.45" y="1113.65" width="1.1" height="1.1"/><rect x="1240.25" y="1112.25" width="1.1" height="1.1"/><rect x="1242.85" y="1112.25" width="1.1" height="1.1"/><rect x="1244.75" y="1113.65" width="1.1" height="1.1"/><rect x="1248.45" y="1117.25" width="1.1" height="1.1"/><rect x="1250.25" y="1118.95" width="1.1" height="1.1"/><rect x="1238.65" y="1119.25" width="1.1" height="1.1"/><rect x="1240.85" y="1120.45" width="1.1" height="1.1"/><rect x="1242.85" y="1120.45" width="1.1" height="1.1"/><rect x="1245.05" y="1119.25" width="1.1" height="1.1"/></g>
<rect x="1236.2" y="1114.9" width="2.4" height="2.4" fill="#bbb" stroke="#555" stroke-width="0.7"/><rect x="1246.3" y="1114.9" width="2.4" height="2.4" fill="#bbb" stroke="#555" stroke-width="0.7"/>
<linearGradient id="npg" x1="0" y1="0" x2="1" y2="1"><stop offset="0" stop-color="#ffffff"/><stop offset="1" stop-color="#b8b8b8"/></linearGradient>
<rect x="1269.5" y="1112.5" width="9" height="9" fill="url(#npg)" stroke="#222" stroke-width="0.8"/>
<path d="M1269.5 1121.8 H1279 V1112.5" fill="none" stroke="#000" stroke-width="1.6"/>
<path d="M1270.2 1121 V1117 H1274.5 V1121 Z" fill="#e8e8e8" stroke="#111" stroke-width="0.9"/>
<path d="M1271.5 1118.3 L1273.6 1120.3" stroke="#111" stroke-width="0.8"/>
<linearGradient id="trg" x1="0" y1="0" x2="1" y2="0"><stop offset="0" stop-color="#9a9a9a"/><stop offset="0.4" stop-color="#fafafa"/><stop offset="1" stop-color="#8a8a8a"/></linearGradient>
<path d="M1298.5 1115.5 H1306.3 L1305.5 1122 Q1302.4 1123 1299.3 1122 Z" fill="url(#trg)" stroke="#222" stroke-width="0.9"/>
<path d="M1297.6 1115.2 Q1302.4 1112.2 1307.2 1115.2 Q1302.4 1116.6 1297.6 1115.2 Z" fill="url(#trg)" stroke="#222" stroke-width="0.9"/>
<path d="M1301 1113.4 Q1302.4 1111.2 1303.8 1113.4" fill="none" stroke="#222" stroke-width="0.9"/>
<path d="M1301.2 1117 V1121.6 M1303.6 1117 V1121.6" stroke="#333" stroke-width="0.8"/>
<g fill="#8a8a8a"><rect x="1328" y="1114" width="1" height="1"/><rect x="1326" y="1116" width="1" height="1"/><rect x="1328" y="1116" width="1" height="1"/><rect x="1324" y="1118" width="1" height="1"/><rect x="1326" y="1118" width="1" height="1"/><rect x="1328" y="1118" width="1" height="1"/><rect x="1322" y="1120" width="1" height="1"/><rect x="1324" y="1120" width="1" height="1"/><rect x="1326" y="1120" width="1" height="1"/><rect x="1328" y="1120" width="1" height="1"/><rect x="1320" y="1122" width="1" height="1"/><rect x="1322" y="1122" width="1" height="1"/><rect x="1324" y="1122" width="1" height="1"/><rect x="1326" y="1122" width="1" height="1"/><rect x="1328" y="1122" width="1" height="1"/></g>
</svg>
</div>
</body></html>
